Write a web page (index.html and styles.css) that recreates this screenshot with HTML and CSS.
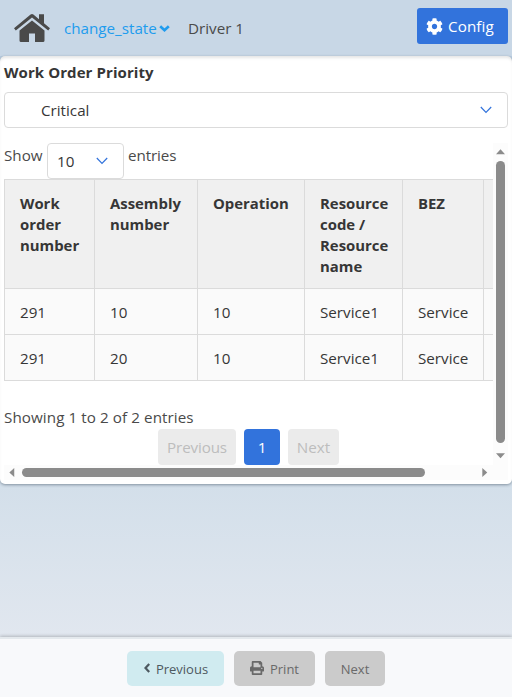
FILE: index.html
```html
<!DOCTYPE html>
<html lang="en">
<head>
<meta charset="utf-8">
<title>Work orders</title>
<link rel="stylesheet" href="styles.css">
</head>
<body>
<header class="topbar">
  <svg class="home" viewBox="0 0 36 28"><path d="M0 14.2 16.6.6q1.4-1.1 2.8 0L25 5.2V.2h5v9.1l6 4.9-1.8 2.3L18 3.6 1.8 16.5z"/><path d="M18 6.600 30.500 16.600V26.500q0 1.500-1.500 1.500h-8V19.600h-6V28H7q-1.500 0-1.500-1.500v-9.900z"/></svg>
  <a class="state"><span>change_state</span><svg viewBox="0 0 11 7"><path d="M1.200 1.300 5.500 5.200 9.800 1.300"/></svg></a>
  <span class="driver">Driver 1</span>
  <button class="config"><svg viewBox="0 0 512 512"><path d="M487.4 315.7l-42.6-24.6c4.3-23.2 4.3-47 0-70.2l42.6-24.6c4.9-2.8 7.1-8.6 5.5-14-11.1-35.6-30-67.8-54.7-94.6-3.8-4.1-10-5.1-14.8-2.3L380.8 110c-17.9-15.4-38.5-27.3-60.8-35.1V25.8c0-5.6-3.9-10.5-9.4-11.7-36.7-8.2-74.3-7.8-109.2 0-5.5 1.2-9.4 6.1-9.4 11.7V75c-22.2 7.9-42.8 19.8-60.8 35.1L88.700 85.500c-4.900-2.800-11-1.900-14.800 2.300-24.700 26.700-43.600 58.900-54.700 94.600-1.700 5.400.6 11.200 5.500 14L67.300 221c-4.300 23.200-4.300 47 0 70.200l-42.600 24.600c-4.900 2.800-7.100 8.600-5.500 14 11.100 35.600 30 67.800 54.700 94.600 3.800 4.100 10 5.100 14.800 2.300l42.600-24.600c17.900 15.400 38.500 27.300 60.800 35.100v49.200c0 5.600 3.900 10.500 9.400 11.700 36.700 8.200 74.300 7.800 109.200 0 5.500-1.200 9.400-6.100 9.400-11.700v-49.200c22.200-7.900 42.800-19.800 60.800-35.100l42.600 24.600c4.900 2.800 11 1.900 14.800-2.300 24.700-26.700 43.600-58.900 54.700-94.600 1.500-5.500-.7-11.300-5.600-14.100zM256 336c-44.100 0-80-35.900-80-80s35.900-80 80-80 80 35.900 80 80-35.900 80-80 80z"/></svg><span>Config</span></button>
</header>
<main class="card">
  <h1>Work Order Priority</h1>
  <div class="select priority"><span>Critical</span><svg class="chev" viewBox="0 0 12 8"><path d="M.8 1 6 6.400 11.200 1"/></svg></div>
  <section class="scroller">
    <div class="content">
      <div class="length"><span class="show">Show</span><div class="select count"><span>10</span><svg class="chev" viewBox="0 0 12 8"><path d="M.8 1 6 6.400 11.200 1"/></svg></div><span class="entries">entries</span></div>
      <table>
        <colgroup><col class="c1"><col class="c2"><col class="c3"><col class="c4"><col class="c5"><col class="c6"></colgroup>
        <thead><tr><th>Work<br>order<br>number</th><th>Assembly<br>number</th><th>Operation</th><th>Resource<br>code /<br>Resource<br>name</th><th>BEZ</th><th></th></tr></thead>
        <tbody>
          <tr><td>291</td><td>10</td><td>10</td><td>Service1</td><td>Service</td><td></td></tr>
          <tr><td>291</td><td>20</td><td>10</td><td>Service1</td><td>Service</td><td></td></tr>
        </tbody>
      </table>
      <p class="info">Showing 1 to 2 of 2 entries</p>
      <nav class="pages"><span class="off prev">Previous</span><span class="on">1</span><span class="off next">Next</span></nav>
    </div>
    <div class="vbar"><svg viewBox="0 0 10 6"><path d="M0 5.500 5 0l5 5.500z"/></svg><i></i><svg viewBox="0 0 10 6"><path d="M0 0h10L5 5.500z"/></svg></div>
    <div class="hbar"><svg viewBox="0 0 6 10"><path d="M5.500 0v10L0 5z"/></svg><i></i><svg viewBox="0 0 6 10"><path d="M0 0v10l5.500-5z"/></svg></div>
  </section>
</main>
<footer class="bottom">
  <button class="act back"><svg viewBox="0 0 8 10"><path d="M6.200 1 2.500 5l3.700 4"/></svg><span>Previous</span></button>
  <button class="act print"><svg viewBox="0 0 512 512"><path fill-rule="evenodd" d="M448 192V77.250c0-8.490-3.370-16.620-9.370-22.630L393.370 9.370c-6-6-14.140-9.370-22.630-9.370H96C78.330 0 64 14.330 64 32v160c-35.350 0-64 28.650-64 64v112c0 8.840 7.160 16 16 16h48v96c0 17.670 14.330 32 32 32h320c17.670 0 32-14.330 32-32v-96h48c8.840 0 16-7.160 16-16V256c0-35.350-28.650-64-64-64zm-64 256H128v-96h256v96zm0-224H128V64h192v48c0 8.840 7.160 16 16 16h48v96zm48 72a24 24 0 1 1 0-48 24 24 0 0 1 0 48z"/></svg><span>Print</span></button>
  <button class="act fwd"><span>Next</span></button>
</footer>
</body>
</html>
```

FILE: styles.css
```css
* { box-sizing: border-box; }
html, body { height: 100%; }
body {
  margin: 0;
  overflow: hidden;
  display: flex;
  flex-direction: column;
  background: linear-gradient(#b9cde0 0, #b9cde0 56px, #d3dfea 485px, #e1e7ef 637px);
  color: #4a4a4a;
  font: 15.2px/24px "Open Sans", "Noto Sans", sans-serif;
  white-space: nowrap;
}
svg { display: block; flex: none; fill: currentColor; }
button { border: 0; font: inherit; padding: 0; display: flex; align-items: center; }
.topbar { height: 56px; flex: none; display: flex; align-items: center; padding: 0 4px 0 14px; background: #c8d7e6; }
.home { width: 36px; height: 28px; }
.state { display: flex; align-items: center; margin-left: 14px; width: 106px; color: #209cee; }
.state span { width: 95px; }
.state svg { width: 11px; height: 7px; fill: none; stroke: currentColor; stroke-width: 2.7; }
.driver { margin-left: 18px; }
.config { width: 91px; height: 36px; margin: -4px 0 0 auto; padding-left: 9px; gap: 5px; border-radius: 3px; background: #3273dc; color: #fff; }
.config svg { width: 17px; height: 17px; }
.config span { letter-spacing: .1px; }
.card { height: 428px; flex: none; padding: 4px 4px 0; border-radius: 5px; background: #fff; box-shadow: 0 1px 3px rgba(10, 30, 50, .4), inset 0 3px 3px -1px rgba(10, 10, 10, .1); }
h1 { margin: 0 0 8px; font-size: 15px; line-height: 24px; letter-spacing: .08px; font-weight: 700; color: #363636; }
.select { border: 1px solid #dbdbdb; border-radius: 4px; height: 36px; display: flex; align-items: center; justify-content: space-between; color: #363636; background: #fff; }
.priority { padding: 0 15px 0 36px; }
.chev { width: 12px; height: 8px; fill: none; stroke: #3273dc; stroke-width: 1.2; }
.scroller { display: grid; grid-template-columns: 489px 15px; grid-template-rows: 322px 15px; margin-top: 15px; }
.content { overflow: hidden; }
.length { display: flex; height: 36px; }
.show { width: 43px; }
.count { width: 77px; padding: 0 15px 0 9px; }
.entries { margin-left: 4px; letter-spacing: -.1px; }
table { width: 530px; table-layout: fixed; border-collapse: collapse; color: #363636; }
.c1 { width: 90px; } .c2 { width: 103px; } .c3 { width: 107px; } .c4 { width: 98px; } .c5 { width: 81px; } .c6 { width: 51px; }
th, td { border: 1px solid #dbdbdb; padding: 13px 0 0 15px; text-align: left; vertical-align: top; line-height: 21px; }
th { height: 109px; background: #f0f0f0; font-weight: 700; font-size: 14.9px; }
td { height: 46px; background: #fafafa; }
.info { margin: 24px 0 0; letter-spacing: .08px; }
.pages { display: flex; justify-content: center; gap: 8px; height: 36px; }
.pages span { display: flex; align-items: center; justify-content: center; border-radius: 4px; }
.off { background: #ebebeb; color: #bdbdbd; }
.pages .prev { width: 78px; letter-spacing: -.15px; }
.on { width: 36px; background: #3273dc; color: #fff; }
.next { width: 51px; }
.vbar, .hbar { display: flex; align-items: center; background: #fcfcfc; color: #8b8b8b; }
.vbar { flex-direction: column; padding: 6px 0 6px; }
.vbar svg { width: 9px; height: 6px; }
.vbar i { width: 9px; height: 282px; margin: 6px 0 auto; border-radius: 5px; background: #8b8b8b; }
.hbar { grid-column: 1 / 3; padding: 0 20px 0 5px; }
.hbar svg { width: 6px; height: 9px; }
.hbar i { width: 403px; height: 9px; margin: 0 auto 0 7px; border-radius: 5px; background: #8b8b8b; }
.bottom { margin-top: auto; height: 60px; flex: none; display: flex; align-items: flex-start; justify-content: center; gap: 10px; padding-top: 12px; border-top: 2px solid #e4e9ed; background: #f8f9fb; box-shadow: 0 -1px 3px rgba(10, 10, 10, .22); }
.act { height: 35px; border-radius: 5px; justify-content: center; color: #696969; font-size: 13px; background: #cbcbcb; }
.back { width: 97px; gap: 5px; background: #d0ebf0; color: #4d5960; }
.back svg { width: 8px; height: 10px; margin-top: -2px; fill: none; stroke: currentColor; stroke-width: 2.2; }
.print { width: 81px; gap: 6px; }
.print svg { width: 14px; height: 14px; margin-top: -1px; }
.fwd { width: 60px; }
```
